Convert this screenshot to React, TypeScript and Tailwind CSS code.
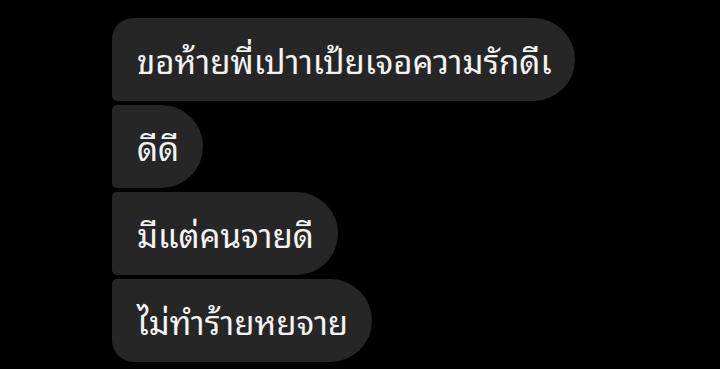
const messages = [
  "ขอห้ายพี่เปาาเป้ยเจอความรักดีเ",
  "ดีดี",
  "มีแต่คนจายดี",
  "ไม่ทำร้ายหยจาย",
];

function Bubble({ text, first, last }: { text: string; first: boolean; last: boolean }) {
  const tl = first ? "rounded-tl-[22px]" : "rounded-tl-[5px]";
  const bl = last ? "rounded-bl-[22px]" : "rounded-bl-[5px]";
  return (
    <div
      className={`flex items-center h-[83px] pl-[25px] pr-[24px] bg-[#262626] rounded-r-[42px] ${tl} ${bl}`}
    >
      <p className="text-[33px] leading-none text-[#f3f3f3] whitespace-nowrap">{text}</p>
    </div>
  );
}

export default function App() {
  return (
    <div
      className="w-[720px] h-[369px] overflow-hidden bg-black pl-[112px] pt-[18px]"
      style={{ fontFamily: '"Noto Sans Thai Looped", Loma, Garuda, "TlwgTypo", "Noto Sans", "DejaVu Sans", sans-serif' }}
    >
      <div className="flex flex-col items-start gap-[4px]">
        {messages.map((m, i) => (
          <Bubble key={i} text={m} first={i === 0} last={i === messages.length - 1} />
        ))}
      </div>
    </div>
  );
}
